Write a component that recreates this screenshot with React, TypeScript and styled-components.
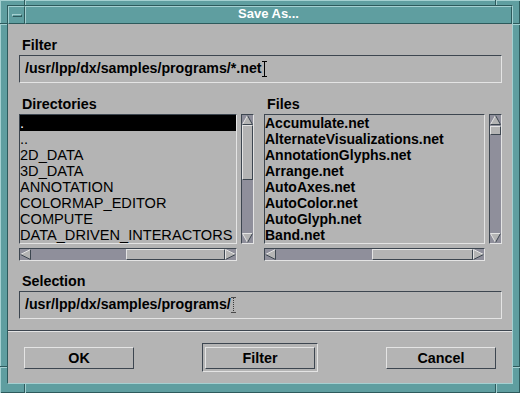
import React from "react";
import styled, { createGlobalStyle } from "styled-components";

const gray = "#b4b4b4";
const dark = "#3d4650";
const light = "#e4e4e4";
const trough = "#8f8f9b";
const teal = "#5f9ea0";
const tealLight = "#a4d0d1";
const tealDark = "#2d5a5c";

const DIRS = [
  ".",
  "..",
  "2D_DATA",
  "3D_DATA",
  "ANNOTATION",
  "COLORMAP_EDITOR",
  "COMPUTE",
  "DATA_DRIVEN_INTERACTORS",
];

const FILES = [
  "Accumulate.net",
  "AlternateVisualizations.net",
  "AnnotationGlyphs.net",
  "Arrange.net",
  "AutoAxes.net",
  "AutoColor.net",
  "AutoGlyph.net",
  "Band.net",
];

type Dir = "up" | "down" | "left" | "right";

const Arrow = ({ dir }: { dir: Dir }) => {
  const vertical = dir === "up" || dir === "down";
  const w = 11;
  const h = vertical ? 10 : 11;
  let fill = "";
  let lit = "";
  let shade = "";
  if (dir === "up") {
    fill = "5.5,0.5 10.5,9.5 0.5,9.5";
    lit = "M0.5 9.5 L5.5 0.5";
    shade = "M5.5 0.5 L10.5 9.5 M0.5 9.5 H10.5";
  } else if (dir === "down") {
    fill = "0.5,0.5 10.5,0.5 5.5,9.5";
    lit = "M0.5 0.5 H10.5 M0.5 0.5 L5.5 9.5";
    shade = "M5.5 9.5 L10.5 0.5";
  } else if (dir === "left") {
    fill = "0.5,5.5 10.5,0.5 10.5,10.5";
    lit = "M0.5 5.5 L10.5 0.5";
    shade = "M10.5 0.5 V10.5 M0.5 5.5 L10.5 10.5";
  } else {
    fill = "0.5,0.5 10.5,5.5 0.5,10.5";
    lit = "M0.5 10.5 V0.5 L10.5 5.5";
    shade = "M10.5 5.5 L0.5 10.5";
  }
  return (
    <svg width={w} height={h} viewBox={`0 0 ${w} ${h}`} style={{ display: "block", flex: "none" }}>
      <polygon points={fill} fill={gray} />
      <path d={lit} stroke={light} strokeWidth={1} fill="none" />
      <path d={shade} stroke={dark} strokeWidth={1} fill="none" />
    </svg>
  );
};

const ScrollBar = ({ vertical, start, size }: { vertical?: boolean; start: number; size: number }) => (
  <Trough $vertical={vertical}>
    <Arrow dir={vertical ? "up" : "left"} />
    <Track $vertical={vertical}>
      <Thumb $vertical={vertical} $start={start} $size={size} />
    </Track>
    <Arrow dir={vertical ? "down" : "right"} />
  </Trough>
);

const FileList = ({
  items,
  bold,
  selected,
  hStart,
  hSize,
  vStart,
  vSize,
}: {
  items: string[];
  bold?: boolean;
  selected?: number;
  hStart: number;
  hSize: number;
  vStart: number;
  vSize: number;
}) => (
  <ListArea>
    <ListBox>
      {items.map((item, i) => (
        <Row key={item} $bold={bold} $selected={i === selected}>
          {item}
        </Row>
      ))}
    </ListBox>
    <ScrollBar vertical start={vStart} size={vSize} />
    <ScrollBar start={hStart} size={hSize} />
  </ListArea>
);

const App = () => {
  return (
    <>
      <GlobalStyle />
      <Frame>
        <Well>
          <TitleBar>
            <MenuButton>
              <MenuGlyph />
            </MenuButton>
            <Title>Save As...</Title>
          </TitleBar>
          <Content>
            <Main>
              <Label>Filter</Label>
              <Field>
                /usr/lpp/dx/samples/programs/*.net
                <Caret />
              </Field>
              <Lists>
                <Column>
                  <Label>Directories</Label>
                  <FileList items={DIRS} selected={0} vStart={0} vSize={55} hStart={95} hSize={99} />
                </Column>
                <Column>
                  <Label>Files</Label>
                  <FileList items={FILES} bold vStart={1} vSize={9} hStart={96} hSize={101} />
                </Column>
              </Lists>
              <Label $spaced>Selection</Label>
              <Field>
                /usr/lpp/dx/samples/programs/
                <Caret $dim />
              </Field>
            </Main>
            <Separator />
            <ButtonRow>
              <Button>OK</Button>
              <DefaultRing>
                <Button>Filter</Button>
              </DefaultRing>
              <Button>Cancel</Button>
            </ButtonRow>
          </Content>
        </Well>
        <EdgeMark $vertical $x={24} $y={0} $len={5} />
        <EdgeMark $vertical $x={495} $y={0} $len={5} />
        <EdgeMark $vertical $x={24} $y={384} $len={9} />
        <EdgeMark $vertical $x={495} $y={384} $len={9} />
        <EdgeMark $x={0} $y={23} $len={7} />
        <EdgeMark $x={0} $y={366} $len={7} />
        <EdgeMark $x={513} $y={23} $len={7} />
        <EdgeMark $x={513} $y={366} $len={7} />
      </Frame>
    </>
  );
};

export default App;

const GlobalStyle = createGlobalStyle`
  html, body {
    margin: 0;
    padding: 0;
    background: ${teal};
  }
  body {
    font-family: "Liberation Sans", Arial, Helvetica, sans-serif;
  }
`;

const Frame = styled.div`
  position: relative;
  width: 520px;
  height: 393px;
  box-sizing: border-box;
  padding: 5px 7px 9px 7px;
  background: ${teal};
  box-shadow: inset 1px 1px 0 ${tealLight}, inset -1px -1px 0 ${tealDark};
`;

const Well = styled.div`
  height: 100%;
  box-sizing: border-box;
  display: flex;
  flex-direction: column;
  border: 1px solid;
  border-color: ${tealDark} ${tealLight} ${tealLight} ${tealDark};
`;

const EdgeMark = styled.span<{ $vertical?: boolean; $x: number; $y: number; $len: number }>`
  position: absolute;
  left: ${(p) => p.$x}px;
  top: ${(p) => p.$y}px;
  box-sizing: border-box;
  background: ${tealLight};
  ${(p) =>
    p.$vertical
      ? `width: 2px; height: ${p.$len}px; border-left: 1px solid ${tealDark};`
      : `height: 2px; width: ${p.$len}px; border-top: 1px solid ${tealDark};`}
`;

const TitleBar = styled.div`
  display: flex;
  height: 18px;
  flex: none;
`;

const MenuButton = styled.div`
  width: 17px;
  box-sizing: border-box;
  display: flex;
  align-items: center;
  justify-content: center;
  background: ${teal};
  border: 1px solid;
  border-color: ${tealLight} ${tealDark} ${tealDark} ${tealLight};
`;

const MenuGlyph = styled.span`
  width: 10px;
  height: 3px;
  box-sizing: border-box;
  border: 1px solid;
  border-color: ${tealLight} ${tealDark} ${tealDark} ${tealLight};
`;

const Title = styled.div`
  flex: 1;
  box-sizing: border-box;
  background: ${teal};
  border: 1px solid;
  border-color: ${tealLight} ${tealDark} ${tealDark} ${tealLight};
  color: #ffffff;
  font-weight: bold;
  font-size: 13px;
  line-height: 14px;
  text-align: center;
`;

const Content = styled.div`
  flex: 1;
  display: flex;
  flex-direction: column;
  background: ${gray};
  color: #000;
`;

const Main = styled.div`
  display: flex;
  flex-direction: column;
  padding: 13px 10px 11px 11px;
`;

const Label = styled.div<{ $spaced?: boolean }>`
  height: 16px;
  line-height: 16px;
  padding-left: 3px;
  margin-bottom: 2px;
  margin-top: ${(p) => (p.$spaced ? "12px" : "0")};
  font-size: 14.3px;
  font-weight: bold;
  white-space: nowrap;
`;

const Field = styled.div`
  height: 28px;
  box-sizing: border-box;
  padding: 0 5px;
  border: 1px solid;
  border-color: ${dark} ${light} ${light} ${dark};
  font-size: 14.2px;
  font-weight: bold;
  line-height: 24px;
  white-space: nowrap;
  overflow: hidden;
`;

const Caret = styled.span<{ $dim?: boolean }>`
  display: inline-block;
  position: relative;
  width: 5px;
  height: 16px;
  margin-left: 0px;
  vertical-align: -4px;
  box-sizing: border-box;
  border-top: 1px solid ${(p) => (p.$dim ? "#4a4a4a" : "#000")};
  border-bottom: 1px solid ${(p) => (p.$dim ? "#4a4a4a" : "#000")};
  &::before {
    content: "";
    position: absolute;
    left: 2px;
    top: 0;
    bottom: 0;
    width: 1px;
    background: ${(p) =>
      p.$dim ? "repeating-linear-gradient(to bottom, #3a3a3a 0 1px, transparent 1px 2px)" : "#000"};
  }
`;

const Lists = styled.div`
  display: grid;
  grid-template-columns: 235px 238px;
  column-gap: 10px;
  margin-top: 13px;
`;

const Column = styled.div`
  display: flex;
  flex-direction: column;
`;

const ListArea = styled.div`
  display: grid;
  grid-template-columns: 1fr 13px;
  grid-template-rows: 130px 13px;
  gap: 4px;
`;

const ListBox = styled.div`
  box-sizing: border-box;
  border: 1px solid;
  border-color: ${dark} ${light} ${light} ${dark};
  overflow: hidden;
`;

const Row = styled.div<{ $bold?: boolean; $selected?: boolean }>`
  height: 16px;
  line-height: 16px;
  white-space: nowrap;
  overflow: hidden;
  font-size: ${(p) => (p.$bold ? "14px" : "14.6px")};
  font-weight: ${(p) => (p.$bold ? "bold" : "normal")};
  background: ${(p) => (p.$selected ? "#000" : "transparent")};
  color: ${(p) => (p.$selected ? "#fff" : "#000")};
`;

const Trough = styled.div<{ $vertical?: boolean }>`
  display: flex;
  flex-direction: ${(p) => (p.$vertical ? "column" : "row")};
  box-sizing: border-box;
  background: ${trough};
  border: 1px solid;
  border-color: ${dark} ${light} ${light} ${dark};
`;

const Track = styled.div<{ $vertical?: boolean }>`
  flex: 1;
  display: flex;
  flex-direction: ${(p) => (p.$vertical ? "column" : "row")};
  overflow: hidden;
`;

const Thumb = styled.div<{ $vertical?: boolean; $start: number; $size: number }>`
  flex: none;
  box-sizing: border-box;
  background: ${gray};
  border: 1px solid;
  border-color: ${light} ${dark} ${dark} ${light};
  ${(p) =>
    p.$vertical
      ? `margin-top: ${p.$start}px; height: ${p.$size}px;`
      : `margin-left: ${p.$start}px; width: ${p.$size}px;`}
`;

const Separator = styled.div`
  height: 2px;
  box-sizing: border-box;
  border-top: 1px solid ${dark};
  border-bottom: 1px solid ${light};
`;

const ButtonRow = styled.div`
  flex: 1;
  display: flex;
  justify-content: space-between;
  align-items: center;
  padding: 0 16px;
`;

const Button = styled.div`
  width: 110px;
  height: 22px;
  box-sizing: border-box;
  border: 1px solid;
  border-color: ${light} ${dark} ${dark} ${light};
  background: ${gray};
  font-size: 14.3px;
  font-weight: bold;
  line-height: 20px;
  text-align: center;
`;

const DefaultRing = styled.div`
  padding: 3px 2px 2px 2px;
  border: 1px solid;
  border-color: ${dark} ${light} ${light} ${dark};
`;
